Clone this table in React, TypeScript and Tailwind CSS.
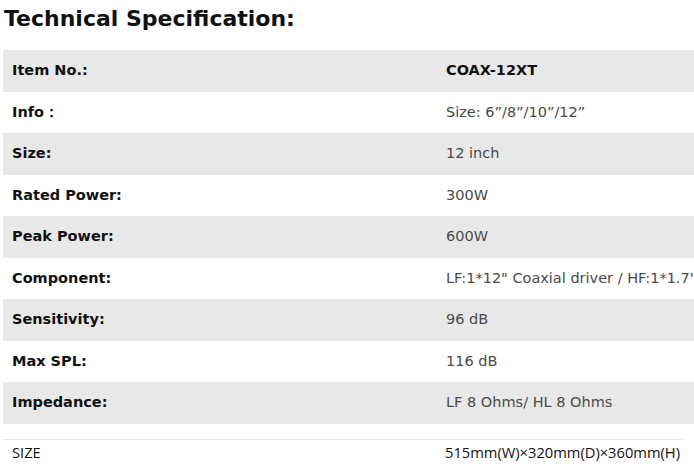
const specs: [string, string][] = [
  ['Item No.:', 'COAX-12XT'],
  ['Info：', 'Size: 6”/8”/10”/12”'],
  ['Size:', '12 inch'],
  ['Rated Power:', '300W'],
  ['Peak Power:', '600W'],
  ['Component:', 'LF:1*12" Coaxial driver / HF:1*1.7\''],
  ['Sensitivity:', '96 dB'],
  ['Max SPL:', '116 dB'],
  ['Impedance:', 'LF 8 Ohms/ HL 8 Ohms'],
]

export default function App() {
  return (
    <div className="w-[694px] h-[470px] overflow-hidden bg-white font-['DejaVu_Sans',sans-serif]">
      <h2 className="pl-[4px] pt-[5px] h-[50px] text-[22px] font-bold text-[#111] leading-[28px]">
        Technical Specification:
      </h2>

      <div className="ml-[3px] w-[691px]">
        {specs.map(([label, value], i) => (
          <div
            key={label}
            className={`grid grid-cols-[443px_1fr] items-center h-[41.5px] ${
              i % 2 === 0 ? 'bg-[#e8e8e8]' : 'bg-white'
            }`}
          >
            <span className="pl-[9px] pt-px text-[14.5px] font-bold text-[#111]">
              {label}
            </span>
            <span
              className={`whitespace-nowrap pt-px text-[14.5px] ${
                i === 0 ? 'font-bold text-[#111]' : 'text-[#4a4a4a]'
              }`}
            >
              {value}
            </span>
          </div>
        ))}
      </div>

      {/* Plain row below the table */}
      <div className="mt-[15px] ml-[3px] w-[681px] border-t border-[#e6e6e6] grid grid-cols-[442px_1fr] items-center h-[26px] font-['Open_Sans',sans-serif] text-[14.7px] text-[#111]">
        <span className="pl-[9px]">SIZE</span>
        <span className="whitespace-nowrap">515mm(W)×320mm(D)×360mm(H)</span>
      </div>
    </div>
  )
}
